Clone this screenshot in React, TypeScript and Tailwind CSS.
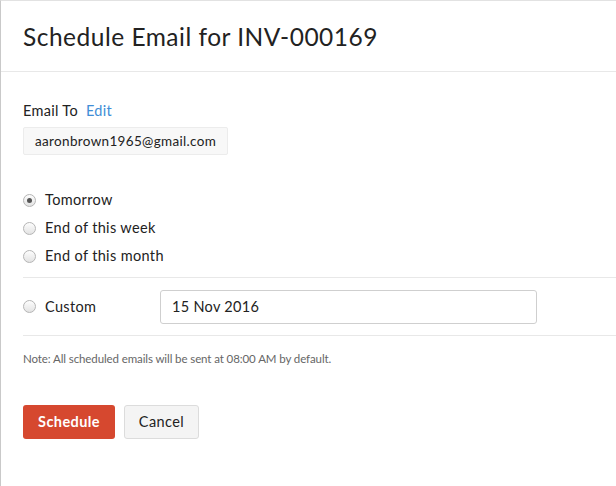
import React, { useState } from "react";

const font = { fontFamily: "Lato, 'Open Sans', sans-serif" };

function Radio({
  checked,
  label,
  onClick,
}: {
  checked: boolean;
  label: string;
  onClick: () => void;
}) {
  return (
    <label className="flex items-center h-[28px] cursor-pointer" onClick={onClick}>
      <span className="w-[13px] h-[13px] rounded-full border border-[#b5b5b5] bg-gradient-to-b from-[#fdfdfd] to-[#e3e3e3] flex items-center justify-center shrink-0">
        {checked && <span className="w-[5px] h-[5px] rounded-full bg-[#555]" />}
      </span>
      <span className="ml-[9px] text-[14.5px] tracking-[0.35px] text-[#222]">{label}</span>
    </label>
  );
}

export default function App() {
  const [when, setWhen] = useState("tomorrow");

  return (
    <div
      className="w-[616px] h-[486px] bg-white border-l border-l-[#c9c9c9] border-t border-t-[#e2e2e2] overflow-hidden"
      style={font}
    >
      {/* header */}
      <div className="h-[71px] border-b border-[#e8e8e8] flex items-center pl-[22px] pt-[2px]">
        <h1 className="text-[24.5px] tracking-[0.5px] text-[#222] font-normal">Schedule Email for INV-000169</h1>
      </div>

      <div className="pl-[22px]">
        {/* email to */}
        <div className="mt-[28px] flex items-center gap-[8px] text-[14.5px] tracking-[0.3px] h-[22px]">
          <span className="text-[#222]">Email To</span>
          <a className="text-[#408dd6] cursor-pointer">Edit</a>
        </div>
        <div className="mt-[5px] inline-flex items-center h-[28px] px-[11px] bg-[#f8f8f8] border border-[#ececec] rounded-[2px] text-[13.5px] tracking-[0.33px] text-[#222]">
          aaronbrown1965@gmail.com
        </div>

        {/* options */}
        <div className="mt-[31px] flex flex-col">
          <Radio checked={when === "tomorrow"} label="Tomorrow" onClick={() => setWhen("tomorrow")} />
          <Radio checked={when === "week"} label="End of this week" onClick={() => setWhen("week")} />
          <Radio checked={when === "month"} label="End of this month" onClick={() => setWhen("month")} />
        </div>

        <div className="mt-[7px] border-t border-[#e8e8e8]" />
        <div className="flex items-center h-[57px]">
          <div className="w-[137px]">
            <Radio checked={when === "custom"} label="Custom" onClick={() => setWhen("custom")} />
          </div>
          <input
            className="w-[377px] h-[34px] border border-[#cfcfcf] rounded-[3px] px-[11px] text-[14.5px] tracking-[0.3px] text-[#222] outline-none"
            style={font}
            defaultValue="15 Nov 2016"
          />
        </div>
        <div className="border-t border-[#e8e8e8]" />

        <p className="mt-[14px] text-[11.5px] tracking-[-0.1px] text-[#666]">
          Note: All scheduled emails will be sent at 08:00 AM by default.
        </p>

        {/* actions */}
        <div className="mt-[38px] flex gap-[9px]">
          <button className="h-[34px] w-[92px] rounded-[3px] bg-[#d6482f] text-white text-[14.5px] tracking-[0.4px] font-bold">
            Schedule
          </button>
          <button className="h-[34px] w-[75px] rounded-[3px] bg-[#f4f4f4] border border-[#dcdcdc] text-[#222] text-[14.5px] tracking-[0.4px]">
            Cancel
          </button>
        </div>
      </div>
    </div>
  );
}
